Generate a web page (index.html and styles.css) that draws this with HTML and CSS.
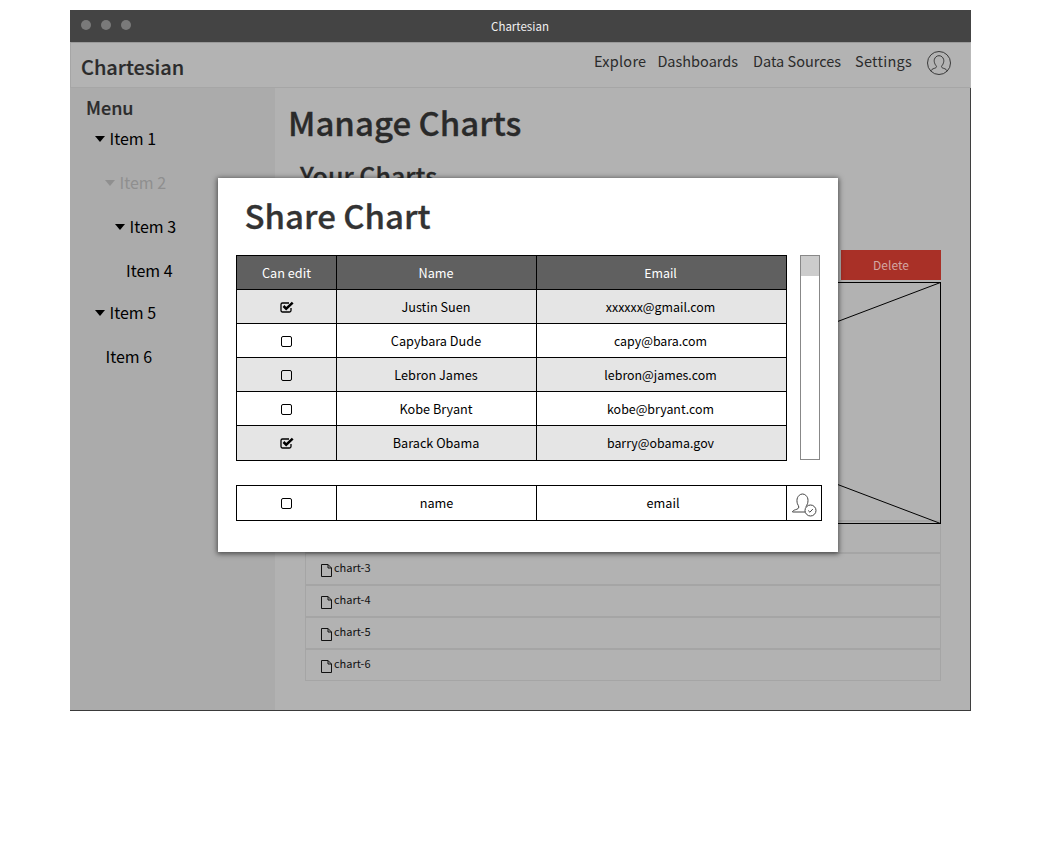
FILE: index.html
```html
<!DOCTYPE html>
<html lang="en">
<head>
<meta charset="utf-8">
<title>Chartesian</title>
<link rel="stylesheet" href="styles.css">
</head>
<body>
<div class="page">
  <div class="window">
    <div class="titlebar">
      <div class="dots"><span class="dot"></span><span class="dot"></span><span class="dot"></span></div>
      <div class="wintitle">Chartesian</div>
    </div>
    <nav class="navbar">
      <div class="brand">Chartesian</div>
      <div class="links">
        <a class="link l-explore">Explore</a>
        <a class="link l-dash">Dashboards</a>
        <a class="link l-data">Data Sources</a>
        <a class="link l-set">Settings</a>
        <svg class="avatar" width="24" height="24" viewBox="0 0 24 24" fill="none" stroke="#2b2b2b" stroke-width="0.9">
          <circle cx="12" cy="12" r="11.5"/>
          <path d="M3.9 20.2c.3-1.600 1.600-2.300 3.600-2.900 1.300-.4 2-.9 2-1.600 0-.8-1-1.400-1.600-2.900-.7-1.600-.9-3-.5-4.500.6-2 2.300-3.600 4.600-3.600s4 1.600 4.600 3.600c.4 1.500.2 2.900-.5 4.500-.6 1.500-1.600 2.100-1.600 2.900 0 .7.700 1.200 2 1.600 2 .6 3.300 1.300 3.600 2.900"/>
        </svg>
      </div>
    </nav>
    <div class="body">
      <aside class="sidebar">
        <div class="menu-title">Menu</div>
        <ul class="menu">
          <li class="mi mi-1"><span class="caret"></span>Item 1</li>
          <li class="mi mi-2 muted"><span class="caret"></span>Item 2</li>
          <li class="mi mi-3"><span class="caret"></span>Item 3</li>
          <li class="mi mi-4">Item 4</li>
          <li class="mi mi-5"><span class="caret"></span>Item 5</li>
          <li class="mi mi-6">Item 6</li>
        </ul>
      </aside>
      <main class="main">
        <h1 class="h-manage">Manage Charts</h1>
        <h2 class="h-your">Your Charts</h2>
        <div class="actions"><button class="btn-delete">Delete</button></div>
        <div class="preview">
          <svg class="cross" width="636" height="242" viewBox="0 0 636 242" preserveAspectRatio="none">
            <rect x="0.5" y="0.500" width="635" height="241" fill="none" stroke="#000"/>
            <path d="M0 241.500 635.500 .5M0 .5 635.500 241.500" stroke="#000" fill="none"/>
          </svg>
        </div>
        <ul class="charts">
          <li class="chart"><svg class="file" width="11" height="13" viewBox="0 0 11 13" fill="none" stroke="#111"><path d="M.5.500h6.500l3.500 3.500v8.500h-10zM7 .5v3.500h3.500"/></svg><span>chart-2</span></li>
          <li class="chart"><svg class="file" width="11" height="13" viewBox="0 0 11 13" fill="none" stroke="#111"><path d="M.5.500h6.500l3.500 3.500v8.500h-10zM7 .5v3.500h3.500"/></svg><span>chart-3</span></li>
          <li class="chart"><svg class="file" width="11" height="13" viewBox="0 0 11 13" fill="none" stroke="#111"><path d="M.5.500h6.500l3.500 3.500v8.500h-10zM7 .5v3.500h3.500"/></svg><span>chart-4</span></li>
          <li class="chart"><svg class="file" width="11" height="13" viewBox="0 0 11 13" fill="none" stroke="#111"><path d="M.5.500h6.500l3.500 3.500v8.500h-10zM7 .5v3.500h3.500"/></svg><span>chart-5</span></li>
          <li class="chart"><svg class="file" width="11" height="13" viewBox="0 0 11 13" fill="none" stroke="#111"><path d="M.5.500h6.500l3.500 3.500v8.500h-10zM7 .5v3.500h3.500"/></svg><span>chart-6</span></li>
        </ul>
      </main>
    </div>
  </div>

  <section class="modal">
    <h2 class="modal-title">Share Chart</h2>
    <div class="share-row">
      <table class="share">
        <colgroup><col class="c1"><col class="c2"><col class="c3"></colgroup>
        <thead>
          <tr><th>Can edit</th><th class="t-name">Name</th><th class="t-mail">Email</th></tr>
        </thead>
        <tbody>
          <tr class="alt"><td><svg class="chk" width="14" height="12" viewBox="0 0 14 12" fill="none" stroke="#000"><path stroke-width="1.300" d="M11 7v2.500a1.500 1.500 0 0 1-1.500 1.500H2.500A1.500 1.500 0 0 1 1 9.500V3.500A1.500 1.500 0 0 1 2.500 2h6.500"/><path stroke-width="2.500" d="M3.500 5l2.700 2.700 6.500-6"/></svg></td><td class="t-name">Justin Suen</td><td class="t-mail">xxxxxx@gmail.com</td></tr>
          <tr><td><span class="box"></span></td><td class="t-name">Capybara Dude</td><td class="t-mail">capy@bara.com</td></tr>
          <tr class="alt"><td><span class="box"></span></td><td class="t-name">Lebron James</td><td class="t-mail">lebron@james.com</td></tr>
          <tr><td><span class="box"></span></td><td class="t-name">Kobe Bryant</td><td class="t-mail">kobe@bryant.com</td></tr>
          <tr class="alt last"><td><svg class="chk" width="14" height="12" viewBox="0 0 14 12" fill="none" stroke="#000"><path stroke-width="1.300" d="M11 7v2.500a1.500 1.500 0 0 1-1.500 1.500H2.500A1.500 1.500 0 0 1 1 9.500V3.500A1.500 1.500 0 0 1 2.500 2h6.500"/><path stroke-width="2.500" d="M3.500 5l2.700 2.700 6.500-6"/></svg></td><td class="t-name">Barack Obama</td><td class="t-mail">barry@obama.gov</td></tr>
        </tbody>
      </table>
      <div class="scrollbar"><div class="thumb"></div></div>
    </div>
    <table class="share add">
      <colgroup><col class="c1"><col class="c2"><col class="c3"><col class="c4"></colgroup>
      <tbody>
        <tr>
          <td><span class="box"></span></td><td>name</td><td class="add-mail">email</td>
          <td class="add-cell">
            <svg class="add-user" width="34" height="34" viewBox="0 0 34 34" fill="none" stroke="#444" stroke-width="1">
              <path d="M5.500 26c.2-1.400 1.500-1.800 3-2.300 2-.6 3.300-1.200 3.300-2.700 0-1.100-.9-1.900-1.400-3.300-.6-1.800-.6-4.500.1-6 .7-1.500 2.300-3.700 5-3.700s4.300 2.200 5 3.700c.7 1.500.6 4.200 0 6-.5 1.300-1.200 2.200-1.600 3M5.500 26h12.500"/>
              <circle cx="23.500" cy="24.500" r="5.500"/>
              <path d="M21.200 24.500l1.700 1.700 2.900-3.100"/>
            </svg>
          </td>
        </tr>
      </tbody>
    </table>
  </section>
</div>
</body>
</html>
```
FILE: styles.css
```css
* { box-sizing: border-box; }
html, body { margin: 0; padding: 0; background: #fff; }
body { font-family: "Noto Sans CJK SC", "Noto Sans", sans-serif; color: #000; }
ul { list-style: none; margin: 0; padding: 0; }
h1, h2 { margin: 0; }

.page { position: relative; width: 1060px; height: 862px; padding: 10px 0 0 70px; overflow: hidden; }
.window { width: 901px; height: 701px; display: flex; flex-direction: column; border-bottom: 1px solid #3a3a3a; }

.titlebar { height: 32px; background: #444; position: relative; display: flex; align-items: center; justify-content: center; flex: none; }
.dots { position: absolute; left: 11px; top: 10px; display: flex; gap: 10px; }
.dot { width: 10px; height: 10px; border-radius: 50%; background: #7a7a7a; }
.wintitle { color: #f0f0f0; font-size: 11.500px; line-height: 16px; margin-left: -1px; margin-top: -1px; }

.navbar { height: 46px; flex: none; background: #b3b3b3; border: 1px solid #a6a6a6; border-right-color: #b9b9b9; border-top-color: #9a9a9a; display: flex; align-items: flex-start; justify-content: space-between; padding-left: 10px; }
.brand { font-size: 20px; font-weight: 500; color: #2b2b2b; line-height: 32px; margin-top: 8px; -webkit-text-stroke: 0.2px #2b2b2b; }
.links { display: flex; align-items: flex-start; padding-right: 19px; padding-top: 7px; }
.link { font-size: 14.500px; line-height: 22px; color: #2b2b2b; }
.l-explore { letter-spacing: 0.25px; }
.l-dash { margin-left: 11px; }
.l-data { margin-left: 15px; }
.l-set { margin-left: 14px; letter-spacing: 0.25px; }
.avatar { margin-left: 15px; margin-top: 1px; }

.body { flex: 1; display: flex; min-height: 0; border-right: 1px solid #3f3f3f; }
.sidebar { width: 205px; flex: none; background: #ababab; padding: 6px 0 0 16px; }
.menu-title { font-size: 18px; font-weight: 500; line-height: 26px; color: #2b2b2b; -webkit-text-stroke: 0.2px #2b2b2b; }
.menu { margin-top: 4px; }
.mi { font-size: 16px; line-height: 26px; height: 44px; color: #000; display: flex; align-items: flex-start; padding-top: 1px; }
.mi.mi-5 { height: 44px; margin-top: -2px; }
.caret { width: 0; height: 0; border-left: 5.500px solid transparent; border-right: 5.500px solid transparent; border-top: 6px solid currentColor; margin-right: 4.500px; margin-top: 11px; flex: none; }
.mi-1, .mi-5 { padding-left: 9px; }
.mi-2 { padding-left: 19px; }
.mi-3 { padding-left: 29px; }
.mi-4 { padding-left: 40px; }
.mi-6 { padding-left: 19.500px; }
.muted { color: #8f8f8f; }

.main { flex: 1; background: #b2b2b2; padding: 0 29px 0 13px; min-width: 0; position: relative; }
.h-manage { font-size: 33px; font-weight: 500; line-height: 48px; color: #2a2a2a; margin-top: 10px; -webkit-text-stroke: 0.3px #2a2a2a; }
.h-your { font-size: 25px; font-weight: 500; line-height: 36px; color: #2a2a2a; margin: 11px 0 0 12px; -webkit-text-stroke: 0.3px #2a2a2a; }
.actions { display: flex; justify-content: flex-end; margin-top: 57px; height: 30px; }
.btn-delete { width: 100px; height: 30px; border: 0; background: #a93027; color: #d3a6a2; font: 400 12px "Noto Sans CJK SC", "Noto Sans", sans-serif; padding: 0 0 2px; }
.preview { margin: 2px 0 0 17px; height: 241px; width: 636px; position: relative; z-index: 1; }
.cross { display: block; }
.charts { margin-left: 17px; margin-top: -3px; width: 636px; border: 1px solid #a5a5a5; border-top: 0; }
.chart { height: 32px; border-top: 2px solid #a5a5a5; display: flex; align-items: flex-start; padding: 8px 0 0 15px; font-size: 11px; line-height: 16px; color: #111; }
.chart .file { margin-top: 2px; margin-right: 2px; flex: none; }
.chart span { margin-top: -3px; }

.modal { position: absolute; left: 218px; top: 178px; width: 620px; height: 374px; background: #fff; box-shadow: 0 1px 5px 1px rgba(0,0,0,.55); padding: 0 0 0 18px; z-index: 2; }
.modal-title { font-size: 33px; font-weight: 500; line-height: 48px; color: #333; margin: 13px 0 0 8.500px; -webkit-text-stroke: 0.3px #333; }
.share-row { display: flex; gap: 13px; margin-top: 16px; align-items: flex-start; }
.share { border-collapse: collapse; table-layout: fixed; font-size: 12.700px; color: #000; }
.share-row .share { width: 550px; }
.share col.c1 { width: 100px; }
.share col.c2 { width: 200px; }
.share col.c3 { width: 250px; }
.share col.c4 { width: 35px; }
.share th, .share td { border: 1px solid #000; padding: 0; text-align: center; height: 34px; vertical-align: middle; line-height: 18px; font-weight: 400; }
.share th { background: #606060; color: #fff; }
.share .alt td { background: #e5e5e5; }
.share .last td { height: 35px; }
.share .t-name { padding-right: 1px; }
.share .t-mail { padding-right: 2px; font-size: 12.400px; }
.box { display: inline-block; width: 11px; height: 11px; border: 1px solid #000; border-radius: 2px; vertical-align: -1px; position: relative; }
.chk { display: inline-block; vertical-align: -1px; }
.scrollbar { width: 20px; height: 205px; background: #fff; border: 1px solid #888; flex: none; }
.thumb { height: 20px; background: #ccc; }
.add { width: 585px; margin-top: 24px; }
.add td { height: 35px; }
.add .add-mail { padding-left: 3px; }
.add .add-cell { padding: 0; position: relative; }
.add-user { display: block; }
```
